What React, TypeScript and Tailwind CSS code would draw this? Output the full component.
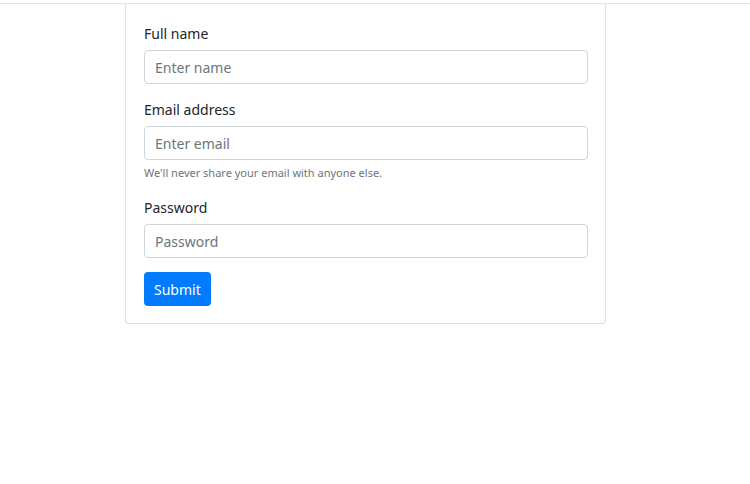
import React from 'react';

const inputClass =
  'block w-full h-[34px] px-[10px] text-[14px] text-[#495057] bg-white border border-[#ced4da] rounded-[4px] placeholder:text-[#6c757d] focus:outline-none';

const App = () => {
  return (
    <div className="min-h-[484px] bg-white pt-[3px] font-['Noto_Sans','Open_Sans',sans-serif] text-[#212529]">
      <div className="border-t border-[#e6e6e6]">
        <div className="ml-[125px] w-[481px] border-x border-b border-[#dfdfdf] rounded-b-[4px] pl-[18px] pr-[17px] pt-[19px] pb-[17px]">
          <form>
            <label className="block h-[21px] leading-[21px] text-[14px] mb-[6px]">Full name</label>
            <input type="text" placeholder="Enter name" className={inputClass} />

            <label className="block h-[21px] leading-[21px] text-[14px] mt-[15px] mb-[6px]">Email address</label>
            <input type="email" placeholder="Enter email" className={inputClass} />
            <small className="block mt-[4px] h-[17px] leading-[17px] text-[11px] text-[#6c757d]">
              We'll never share your email with anyone else.
            </small>

            <label className="block h-[21px] leading-[21px] text-[14px] mt-[16px] mb-[6px]">Password</label>
            <input type="password" placeholder="Password" className={inputClass} />

            <button
              type="button"
              className="mt-[14px] h-[34px] px-[10px] rounded-[4px] bg-[#007bff] text-white text-[14px]"
            >
              Submit
            </button>
          </form>
        </div>
      </div>
    </div>
  );
};

export default App;
